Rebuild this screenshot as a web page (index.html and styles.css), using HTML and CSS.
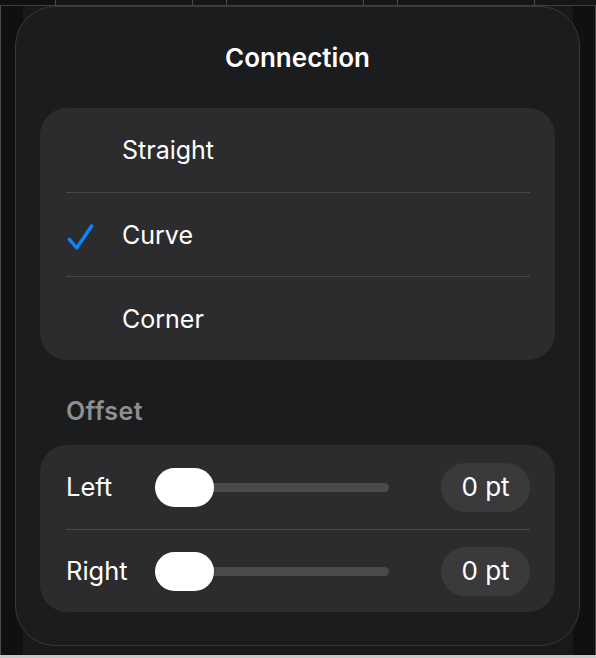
FILE: index.html
```html
<!DOCTYPE html>
<html lang="en">
<head>
<meta charset="utf-8">
<title>Connection</title>
<link rel="stylesheet" href="styles.css">
</head>
<body>
<div class="screen">
  <div class="topbar">
    <div class="cell c1"></div>
    <div class="cell c2"></div>
    <div class="cell c3"></div>
    <div class="cell c2"></div>
    <div class="cell c3"></div>
    <div class="cell c2"></div>
    <div class="cell c4"></div>
  </div>
  <div class="backdrop">
    <div class="side side-left"></div>
    <div class="middle"></div>
    <div class="side side-right"></div>
  </div>
  <div class="bottombar"></div>

  <div class="popover">
    <div class="title">Connection</div>

    <div class="card">
      <div class="opt">
        <span class="check"></span>
        <span class="opt-label">Straight</span>
      </div>
      <div class="opt sep">
        <span class="check">
          <svg viewBox="0 0 30 30" width="30" height="30" aria-hidden="true">
            <path d="M3.3 19.3 L10.7 28 L25.7 6" fill="none" stroke="#0a84ff" stroke-width="3.4" stroke-linecap="round" stroke-linejoin="round"/>
          </svg>
        </span>
        <span class="opt-label">Curve</span>
      </div>
      <div class="opt sep">
        <span class="check"></span>
        <span class="opt-label">Corner</span>
      </div>
    </div>

    <div class="section-label">Offset</div>

    <div class="card card-offset">
      <div class="srow">
        <span class="slabel">Left</span>
        <div class="slider">
          <div class="track"></div>
          <div class="thumb"></div>
        </div>
        <span class="pill">0 pt</span>
      </div>
      <div class="srow sep second">
        <span class="slabel">Right</span>
        <div class="slider">
          <div class="track"></div>
          <div class="thumb"></div>
        </div>
        <span class="pill">0 pt</span>
      </div>
    </div>
  </div>
</div>
</body>
</html>
```

FILE: styles.css
```css
* { box-sizing: border-box; }

html, body {
  margin: 0;
  padding: 0;
  background: #141516;
}

body {
  font-family: Inter, "Noto Sans", "Liberation Sans", sans-serif;
  color: #ffffff;
}

.screen {
  position: relative;
  width: 596px;
  height: 658px;
  display: flex;
  flex-direction: column;
  overflow: hidden;
}

/* underlying content strip at the top */
.topbar {
  height: 6px;
  display: flex;
  border-bottom: 1px solid #3e3f41;
  background: #151617;
}
.cell {
  height: 100%;
  border-right: 1px solid #4a4b4d;
}
.c1 { width: 56px; background: #0f1011; }
.c2 { width: 137px; }
.c3 { width: 34px; }
.c4 { flex: 1; border-right: none; }

.backdrop {
  flex: 1;
  display: flex;
}
.side {
  width: 23px;
  background: #0f1011;
}
.side-left { border-left: 1px solid #4a4b4d; }
.side-right { border-right: 1px solid #4a4b4d; }
.middle {
  flex: 1;
  background: #18191a;
}

.bottombar {
  height: 3px;
  background: #c9c9cb;
}

/* popover */
.popover {
  position: absolute;
  left: 15px;
  top: 6px;
  width: 565px;
  height: 640px;
  border: 1px solid #38383b;
  border-radius: 40px;
  background: #1b1c1d;
  padding: 0 24px;
  display: flex;
  flex-direction: column;
}

.title {
  height: 101px;
  display: flex;
  align-items: center;
  justify-content: center;
  font-size: 26px;
  font-weight: 600;
  padding-bottom: 1px;
}

.card {
  background: #2c2c2e;
  border-radius: 27px;
  display: flex;
  flex-direction: column;
}

.opt {
  height: 84px;
  margin: 0 25px 0 26px;
  display: flex;
  align-items: center;
}
.opt.sep { border-top: 1px solid #48484a; }

.check {
  width: 56px;
  height: 30px;
  display: flex;
  align-items: center;
}
.check svg { display: block; overflow: visible; }

.opt-label {
  font-size: 25px;
  font-weight: 400;
  line-height: 30px;
}

.section-label {
  height: 85px;
  padding: 36px 0 0 26px;
  font-size: 25px;
  font-weight: 600;
  letter-spacing: 0.4px;
  line-height: 30px;
  color: #8e8e93;
}

.card-offset { padding: 0; }

.srow {
  height: 84px;
  margin: 0 25px 0 26px;
  display: flex;
  align-items: center;
}
.srow.second { height: 83px; }
.srow.sep { border-top: 1px solid #48484a; }

.slabel {
  width: 89px;
  font-size: 25.5px;
  line-height: 30px;
}

.slider {
  position: relative;
  width: 234px;
  height: 39px;
  display: flex;
  align-items: center;
}
.track {
  width: 100%;
  height: 9px;
  border-radius: 5px;
  background: #4a4a4c;
}
.thumb {
  position: absolute;
  left: 0;
  top: 0;
  width: 59px;
  height: 39px;
  border-radius: 20px;
  background: #ffffff;
}

.pill {
  margin-left: auto;
  width: 89px;
  height: 49px;
  border-radius: 25px;
  background: #3a3a3c;
  display: flex;
  align-items: center;
  justify-content: center;
  font-size: 26px;
  line-height: 30px;
}
```
